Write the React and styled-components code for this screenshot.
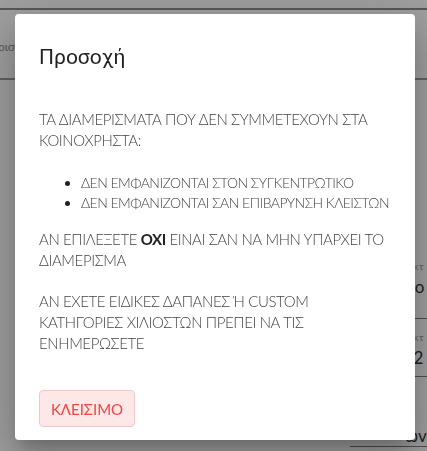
import React from 'react';
import styled, { createGlobalStyle } from 'styled-components';

const GlobalStyle = createGlobalStyle`
  html, body {
    margin: 0;
    padding: 0;
    background: #fafafa;
    font-family: 'Lato', 'Noto Sans', sans-serif;
  }
`;

// page that sits behind the backdrop
const Page = styled.div`
  width: 427px;
  height: 451px;
  overflow: hidden;
  background: #fafafa;
`;

const TopBar = styled.div`
  height: 8px;
  border-bottom: 2px solid #8a8a8a;
`;

const HeaderRow = styled.div`
  height: 68px;
  display: flex;
  align-items: center;
  border-bottom: 2px solid #9a9a9a;
  font-size: 12px;
  color: #8c8c8c;
`;

const HeaderCell = styled.span`
  margin-left: -33px;
  margin-top: 4px;
`;

const Fields = styled.div`
  margin-left: 350px;
  padding-top: 180px;
  display: flex;
  flex-direction: column;
`;

const Field = styled.div`
  display: flex;
  flex-direction: column;
  border-bottom: 1px solid #7a7a7a;
  padding-top: ${(p) => p.top || 0}px;
  height: ${(p) => p.h}px;
  box-sizing: border-box;
  padding-left: 55px;
`;

const FieldLabel = styled.span`
  font-size: 10px;
  color: #9a9a9a;
  letter-spacing: 0.5px;
`;

const FieldValue = styled.span`
  font-size: 17px;
  color: #333;
  margin-top: 4px;
`;

// the modal
const Backdrop = styled.div`
  position: fixed;
  inset: 0;
  background: rgba(0, 0, 0, 0.37);
  display: flex;
  align-items: flex-start;
  justify-content: flex-start;
`;

const Dialog = styled.div`
  margin: 14px 0 0 15px;
  width: 400px;
  height: 426px;
  box-sizing: border-box;
  background: #fff;
  border-radius: 4px;
  box-shadow: 0px 11px 15px -7px rgba(0,0,0,0.2), 0px 24px 38px 3px rgba(0,0,0,0.14), 0px 9px 46px 8px rgba(0,0,0,0.12);
  display: flex;
  flex-direction: column;
`;

const Title = styled.h2`
  margin: 0;
  padding: 27px 24px 0;
  font-family: 'Roboto', 'Noto Sans', sans-serif;
  font-weight: 400;
  font-size: 21px;
  line-height: 32px;
  color: #222;
`;

const Content = styled.div`
  padding: 36px 24px 0;
  color: #444;
  font-family: 'Lato', 'Noto Sans', sans-serif;
  font-weight: 300;
  font-size: 15px;
  line-height: 21px;
  letter-spacing: -0.4px;
`;

const Para = styled.p`
  margin: 0 0 ${(p) => p.gap || 0}px;
`;

const List = styled.ul`
  margin: 22px 0 16px;
  padding-left: 42px;
  font-size: 14px;
  line-height: 20px;
  letter-spacing: -0.55px;

  li::marker {
    color: #222;
  }
`;

const Strong = styled.b`
  font-weight: 700;
  color: #222;
`;

const Actions = styled.div`
  padding: 36px 24px 0;
`;

const CloseButton = styled.button`
  width: 96px;
  height: 37px;
  border: 1px solid #f2c9c9;
  border-radius: 4px;
  background: #fde7e7;
  color: #f04545;
  font-family: 'Lato', 'Noto Sans', sans-serif;
  font-weight: 400;
  font-size: 15px;
  cursor: pointer;
`;

export default function App() {
  return (
    <>
      <GlobalStyle />
      <Page>
        <TopBar />
        <HeaderRow>
          <HeaderCell>Διαμέρισμα</HeaderCell>
        </HeaderRow>
        <Fields>
          <Field h={59}>
            <FieldLabel>Οκτ</FieldLabel>
            <FieldValue>οο</FieldValue>
          </Field>
          <Field h={58} top={12}>
            <FieldLabel>Οκτ</FieldLabel>
            <FieldValue>a2</FieldValue>
          </Field>
          <Field h={70} top={44}>
            <FieldValue>ωv</FieldValue>
          </Field>
        </Fields>
      </Page>
      <Backdrop>
        <Dialog>
          <Title>Προσοχή</Title>
          <Content>
            <Para>ΤΑ ΔΙΑΜΕΡΙΣΜΑΤΑ ΠΟΥ ΔΕΝ ΣΥΜΜΕΤΕΧΟΥΝ ΣΤΑ ΚΟΙΝΟΧΡΗΣΤΑ:</Para>
            <List>
              <li>ΔΕΝ ΕΜΦΑΝΙΖΟΝΤΑΙ ΣΤΟΝ ΣΥΓΚΕΝΤΡΩΤΙΚΟ</li>
              <li>ΔΕΝ ΕΜΦΑΝΙΖΟΝΤΑΙ ΣΑΝ ΕΠΙΒΑΡΥΝΣΗ ΚΛΕΙΣΤΩΝ</li>
            </List>
            <Para gap={20}>
              ΑΝ ΕΠΙΛΕΞΕΤΕ <Strong>ΟΧΙ</Strong> ΕΙΝΑΙ ΣΑΝ ΝΑ ΜΗΝ ΥΠΑΡΧΕΙ ΤΟ ΔΙΑΜΕΡΙΣΜΑ
            </Para>
            <Para>ΑΝ ΕΧΕΤΕ ΕΙΔΙΚΕΣ ΔΑΠΑΝΕΣ Ή CUSTOM ΚΑΤΗΓΟΡΙΕΣ ΧΙΛΙΟΣΤΩΝ ΠΡΕΠΕΙ ΝΑ ΤΙΣ ΕΝΗΜΕΡΩΣΕΤΕ</Para>
          </Content>
          <Actions>
            <CloseButton>ΚΛΕΙΣΙΜΟ</CloseButton>
          </Actions>
        </Dialog>
      </Backdrop>
    </>
  );
}
